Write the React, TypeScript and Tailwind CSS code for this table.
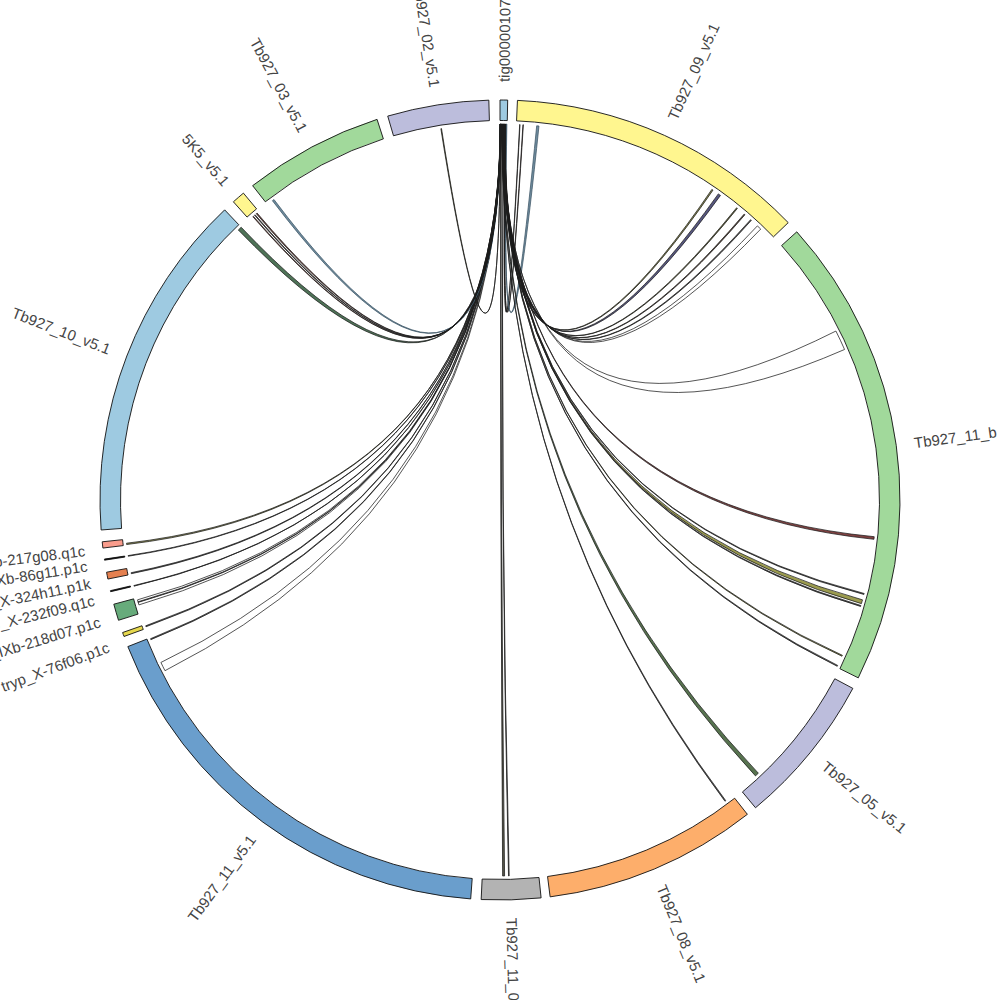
import React from "react";

const CX = 500;
const CY = 500;
const R_OUT = 400;
const R_IN = 379.5;
const R_LINK = 376;
const R_LABEL = 418;

type Seg = { id: string; start: number; end: number; color: string };
type Link = { a: [number, number]; b: [number, number]; fill: string; stroke?: string; w?: number };

const SEGMENTS: Seg[] = [
  { id: "tig00000107", start: 0, end: 1.1, color: "#9ecae1" },
  { id: "Tb927_09_v5.1", start: 2.5, end: 46.1, color: "#fff68f" },
  { id: "Tb927_11_b", start: 47.9, end: 116.4, color: "#a1d99b" },
  { id: "Tb927_05_v5.1", start: 118.1, end: 140.3, color: "#bcbddc" },
  { id: "Tb927_08_v5.1", start: 141.8, end: 172.8, color: "#fdae6b" },
  { id: "Tb927_11_01_v5.1", start: 174.1, end: 182.7, color: "#b3b3b3" },
  { id: "Tb927_11_v5.1", start: 184.2, end: 248.5, color: "#6a9ecc" },
  { id: "tryp_X-76f06.p1c", start: 250.05, end: 250.65, color: "#e6d84e" },
  { id: "tryp_IXb-218d07.p1c", start: 252.5, end: 254.9, color: "#67ab7b" },
  { id: "tryp_X-232f09.q1c", start: 256.75, end: 256.9, color: "#000000" },
  { id: "tryp_X-324h11.p1k", start: 258.6, end: 259.6, color: "#e5804f" },
  { id: "tryp_IXb-86g11.p1c", start: 261.35, end: 261.5, color: "#000000" },
  { id: "tryp_IXb-217g08.q1c", start: 263.1, end: 264.0, color: "#f99c8c" },
  { id: "Tb927_10_v5.1", start: 265.7, end: 316.5, color: "#9ecae1" },
  { id: "5K5_v5.1", start: 318.2, end: 320.1, color: "#fff68f" },
  { id: "Tb927_03_v5.1", start: 321.8, end: 342.1, color: "#a1d99b" },
  { id: "Tb927_02_v5.1", start: 343.7, end: 358.4, color: "#bcbddc" },
];

// label angle nudges where circos pushed the small ones apart
const LABEL_SHIFT: Record<string, number> = {
  "tryp_X-76f06.p1c": -0.9,
  "tryp_IXb-218d07.p1c": -0.6,
  "tryp_X-232f09.q1c": -0.7,
  "tryp_X-324h11.p1k": -0.6,
  "tryp_IXb-86g11.p1c": -0.5,
  "tryp_IXb-217g08.q1c": -0.5,
};

const LINKS: Link[] = [
  // short loops into the start of 09
  { a: [0.85, 0.88], b: [3.0, 3.05], fill: "#333333" },
  { a: [0.9, 0.93], b: [3.5, 3.56], fill: "#5a2a2a" },
  { a: [0.95, 1.05], b: [5.6, 5.95], fill: "#56788d", stroke: "#3d5566" },
  // loops into the end of 09
  { a: [0.6, 0.64], b: [34.3, 34.5], fill: "#7a7a30" },
  { a: [0.65, 0.7], b: [35.5, 35.9], fill: "#3a3a6a" },
  { a: [0.7, 0.72], b: [39.0, 39.15], fill: "#5a5a20" },
  { a: [0.72, 0.75], b: [40.5, 40.65], fill: "#4a3020" },
  { a: [0.75, 0.78], b: [41.8, 41.95], fill: "#333333" },
  { a: [0.78, 0.82], b: [43.2, 43.9], fill: "none" },
  // 11_b
  { a: [0.55, 0.6], b: [63.3, 66.4], fill: "none" },
  { a: [0.5, 0.55], b: [95.6, 96.0], fill: "#6a2020" },
  { a: [0.46, 0.48], b: [104.4, 104.55], fill: "#333333" },
  { a: [0.42, 0.46], b: [105.4, 106.0], fill: "#8a8a30" },
  { a: [0.4, 0.42], b: [106.3, 106.45], fill: "#333333" },
  { a: [0.37, 0.4], b: [114.4, 114.55], fill: "#8a8a30" },
  { a: [0.34, 0.37], b: [116.1, 116.25], fill: "#333333" },
  // 05 and 08
  { a: [0.3, 0.35], b: [136.6, 137.2], fill: "#3a5a30" },
  { a: [0.28, 0.3], b: [143.1, 143.25], fill: "#333333" },
  // straight down to the grey bin
  { a: [0.08, 0.22], b: [179.3, 179.6], fill: "#3a3a2a" },
  { a: [0.5, 0.53], b: [178.6, 178.7], fill: "#333333" },
  // left side
  { a: [0.22, 0.26], b: [243.0, 244.4], fill: "none" },
  { a: [0.2, 0.22], b: [248.2, 248.35], fill: "#333333" },
  { a: [0.18, 0.2], b: [250.3, 250.45], fill: "#333333" },
  { a: [0.13, 0.17], b: [253.8, 254.6], fill: "none" },
  { a: [0.15, 0.16], b: [254.2, 254.3], fill: "#333333" },
  { a: [0.11, 0.13], b: [256.75, 256.85], fill: "#333333" },
  { a: [0.09, 0.11], b: [258.7, 258.85], fill: "#333333" },
  { a: [0.07, 0.09], b: [261.4, 261.5], fill: "#333333" },
  { a: [0.06, 0.07], b: [263.2, 263.4], fill: "#7a7a30" },
  // top left
  { a: [0.03, 0.06], b: [322.75, 323.05], fill: "#56788d", stroke: "#3d5566" },
  { a: [0.02, 0.03], b: [319.6, 319.75], fill: "#6a2a20" },
  { a: [0.03, 0.04], b: [319.25, 319.35], fill: "#333333" },
  { a: [0.04, 0.05], b: [318.9, 319.0], fill: "#8a3020" },
  { a: [0.0, 0.05], b: [315.9, 316.5], fill: "#2f5a3a" },
  { a: [0.05, 0.07], b: [350.95, 351.05], fill: "#5a5a20" },
];

function pt(deg: number, r: number): [number, number] {
  const a = (deg * Math.PI) / 180;
  return [CX + r * Math.sin(a), CY - r * Math.cos(a)];
}

function f(p: [number, number]) {
  return `${p[0].toFixed(2)} ${p[1].toFixed(2)}`;
}

function segPath(s: Seg) {
  return (
    `M${f(pt(s.start, R_OUT))} A${R_OUT} ${R_OUT} 0 0 1 ${f(pt(s.end, R_OUT))} ` +
    `L${f(pt(s.end, R_IN))} A${R_IN} ${R_IN} 0 0 0 ${f(pt(s.start, R_IN))} Z`
  );
}

function linkPath(l: Link) {
  const r = R_LINK;
  return (
    `M${f(pt(l.a[0], r))} Q${CX} ${CY} ${f(pt(l.b[1], r))} ` +
    `A${r} ${r} 0 0 0 ${f(pt(l.b[0], r))} Q${CX} ${CY} ${f(pt(l.a[1], r))} ` +
    `A${r} ${r} 0 0 0 ${f(pt(l.a[0], r))} Z`
  );
}

function Label({ seg }: { seg: Seg }) {
  const deg = (seg.start + seg.end) / 2 + (LABEL_SHIFT[seg.id] ?? 0);
  const [x, y] = pt(deg, R_LABEL);
  const right = deg < 180;
  const rot = right ? deg - 90 : deg + 90 - 360;
  return (
    <text
      x={x}
      y={y}
      transform={`rotate(${rot.toFixed(2)} ${x.toFixed(2)} ${y.toFixed(2)})`}
      textAnchor={right ? "start" : "end"}
      dominantBaseline="central"
      fontSize={15}
      fill="#444444"
      style={{ fontFamily: '"Liberation Sans", Arial, sans-serif' }}
    >
      {seg.id}
    </text>
  );
}

export default function App() {
  return (
    <div className="w-[1000px] h-[1000px] bg-white overflow-hidden">
      <svg width={1000} height={1000} viewBox="0 0 1000 1000" className="block">
        {/* links */}
        <g>
          {LINKS.map((l, i) => (
            <path
              key={i}
              d={linkPath(l)}
              fill={l.fill}
              fillOpacity={l.fill === "none" ? undefined : 0.85}
              stroke={l.stroke ?? "#1c1c1c"}
              strokeWidth={l.w ?? 0.75}
              strokeLinejoin="round"
            />
          ))}
        </g>

        {/* ideograms */}
        <g>
          {SEGMENTS.map((s) => (
            <path key={s.id} d={segPath(s)} fill={s.color} stroke="#111111" strokeWidth={0.9} />
          ))}
        </g>

        {/* labels */}
        <g>
          {SEGMENTS.map((s) => (
            <Label key={s.id} seg={s} />
          ))}
        </g>
      </svg>
    </div>
  );
}
